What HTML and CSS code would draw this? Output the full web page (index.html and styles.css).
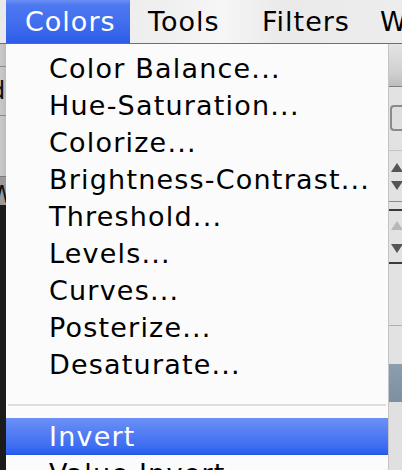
FILE: index.html
```html
<!DOCTYPE html>
<html>
<head>
<meta charset="utf-8">
<link rel="stylesheet" href="styles.css">
</head>
<body>
<div class="menubar">
  <div class="mb-item mb-active">Colors</div>
  <div class="mb-item mb-tools">Tools</div>
  <div class="mb-item mb-filters">Filters</div>
  <div class="mb-item mb-w">W</div>
</div>
<div class="workspace">
  <div class="left-strip">
    <div class="ls-panel">
      <div class="ls-row ls-r1"></div>
      <div class="ls-row ls-r2"><span>d</span></div>
      <div class="ls-row ls-r3"></div>
      <div class="ls-row ls-r4"><span>W</span></div>
    </div>
    <div class="ls-dark"></div>
  </div>
  <div class="menu">
    <div class="item">Color Balance...</div>
    <div class="item">Hue-Saturation...</div>
    <div class="item">Colorize...</div>
    <div class="item">Brightness-Contrast...</div>
    <div class="item">Threshold...</div>
    <div class="item">Levels...</div>
    <div class="item">Curves...</div>
    <div class="item">Posterize...</div>
    <div class="item">Desaturate...</div>
    <div class="sep"></div>
    <div class="item selected">Invert</div>
    <div class="item">Value Invert</div>
  </div>
  <div class="right-strip">
    <div class="rs-top"></div>
    <div class="rs-box"></div>
    <div class="rs-gap1"></div>
    <div class="rs-arrows">
      <span class="up"></span>
      <span class="down"></span>
    </div>
    <div class="rs-gap3"></div>
    <div class="rs-arrows rs-arrows2">
      <span class="up dim"></span>
      <span class="down"></span>
    </div>
    <div class="rs-gap2"></div>
    <div class="rs-mid"></div>
    <div class="rs-blue"></div>
    <div class="rs-rest"></div>
  </div>
</div>
</body>
</html>
```
FILE: styles.css
```css
* { box-sizing: border-box; }
html, body {
  margin: 0;
  padding: 0;
  width: 402px;
  height: 470px;
  overflow: hidden;
  background: #dcdcdc;
  font-family: "DejaVu Sans", "Liberation Sans", sans-serif;
}
.menubar {
  height: 44px;
  display: flex;
  align-items: stretch;
  padding-left: 6px;
  background: linear-gradient(90deg, #e9e9e9 0%, #efefef 40%, #f6f6f6 55%, #eaeaea 70%, #ededed 100%);
  border-bottom: 1px solid #6e6e6e;
}
.mb-item {
  display: flex;
  align-items: center;
  flex: none;
  font-size: 27px;
  letter-spacing: 1px;
  color: #000;
  padding: 0 0 1px 18px;
  height: 43px;
  white-space: nowrap;
  overflow: hidden;
}
.mb-active {
  width: 124px;
  color: #fff;
  padding-left: 19px;
  background: linear-gradient(#6a8ff5 0%, #4d78f0 12%, #3f6cee 60%, #2d5ce8 100%);
}
.mb-tools { width: 114px; }
.mb-filters { width: 118px; }
.mb-w { width: 40px; }

.workspace {
  display: flex;
  height: 426px;
}
.left-strip {
  width: 6px;
  display: flex;
  flex-direction: column;
}
.ls-panel {
  height: 161px;
  background: linear-gradient(90deg, #c9c9c9, #bdbdbd);
  display: flex;
  flex-direction: column;
}
.ls-row {
  border-bottom: 1px solid #8a8a8a;
  overflow: hidden;
  font-size: 24px;
  line-height: 1;
  color: #111;
}
.ls-row span { display: block; margin-left: -10px; }
.ls-r1 { height: 23px; }
.ls-r2 { height: 49px; padding-top: 12px; }
.ls-r3 { height: 61px; border-bottom-color: #7a7a7a; }
.ls-r4 { height: 28px; border-bottom: none; padding-top: 6px; background: #9a9a9a; }
.ls-dark {
  flex: 1;
  background: #1b1b1c;
}

.menu {
  width: 382px;
  background: #fbfbfb;
  padding-top: 6px;
  display: flex;
  flex-direction: column;
}
.item {
  height: 37px;
  flex: none;
  display: flex;
  align-items: center;
  padding-left: 43px;
  font-size: 27px;
  letter-spacing: 1.2px;
  color: #000;
  white-space: nowrap;
}
.sep {
  height: 2px;
  flex: none;
  margin: 21px 2px 12px 2px;
  background: #dedede;
}
.selected {
  color: #fff;
  background: linear-gradient(#6c90f6 0%, #5a82f4 30%, #3f6ef1 75%, #2a60ee 95%, #1f55e0 100%);
}

.right-strip {
  width: 14px;
  display: flex;
  flex-direction: column;
  background: #e2e2e2;
  border-left: 1px solid #c4c4c4;
}
.right-strip > div { flex: none; }
.rs-top {
  height: 43px;
  background: linear-gradient(#e4e4e4, #cfcfcf 70%, #bdbdbd);
  border-bottom: 1px solid #7f7f7f;
}
.rs-box {
  height: 26px;
  margin-top: 18px;
  margin-left: 1px;
  border: 2px solid #8a8a8a;
  border-right: none;
  border-radius: 4px 0 0 4px;
  background: #dedede;
}
.rs-gap1 { height: 20px; border-bottom: 1px solid #c4c4c4; }
.rs-arrows {
  height: 51px;
  display: flex;
  flex-direction: column;
  align-items: center;
  justify-content: center;
  gap: 9px;
  border-bottom: 1px solid #8c8c8c;
  padding-left: 2px;
}
.rs-gap3 { height: 9px; border-bottom: 2px solid #3a3a3a; }
.rs-arrows2 { height: 53px; border-bottom: 2px solid #3a3a3a; gap: 14px; }
.up, .down {
  width: 0;
  height: 0;
  border-left: 6px solid transparent;
  border-right: 6px solid transparent;
}
.up { border-bottom: 9px solid #555; }
.down { border-top: 9px solid #555; }
.up.dim { border-bottom-color: #b8b8b8; }
.rs-gap2 { height: 62px; border-bottom: 1px solid #b0b0b0; }
.rs-mid { height: 38px; }
.rs-blue {
  height: 38px;
  background: linear-gradient(#8a9eaf, #7c90a2);
}
.right-strip > .rs-rest { flex: 1; background: #e0e0e0; }
```
